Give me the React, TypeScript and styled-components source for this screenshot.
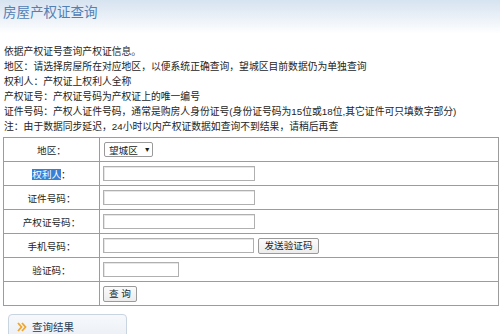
import React from "react";
import styled, { createGlobalStyle } from "styled-components";

const Global = createGlobalStyle`
  html, body { margin: 0; padding: 0; background: #fff; }
  body { font-family: "Liberation Sans", "Noto Sans CJK SC", sans-serif; color: #2b2b2b; overflow: hidden; }
  * { box-sizing: border-box; }
`;

const Page = styled.div`
  width: 500px;
  height: 334px;
  position: relative;
  overflow: hidden;
`;

const Header = styled.div`
  height: 34px;
  padding: 3px 0 0 3px;
  background: linear-gradient(180deg, #d6e3f0 0%, #e8eff7 45%, #ffffff 100%);
`;

const Title = styled.h1`
  margin: 0;
  font-size: 13.5px;
  font-weight: normal;
  line-height: 19px;
  color: #5080b4;
  letter-spacing: 0;
`;

const Intro = styled.div`
  padding: 10px 0 0 4px;
  font-size: 9.8px;
  line-height: 15px;
  color: #242424;
  white-space: nowrap;
`;

const Line = styled.div``;

const Table = styled.table`
  margin: 3px 0 0 3px;
  width: 496px;
  border-collapse: collapse;
  border: 1px solid #8a8a8a;
  font-size: 9.6px;
`;

const Row = styled.tr`
  height: 24px;
`;

const LabelCell = styled.td`
  width: 96px;
  border: 1px solid #9c9c9c;
  text-align: center;
  vertical-align: middle;
  padding: 0;
  color: #242424;
`;

const FieldCell = styled.td`
  border: 1px solid #9c9c9c;
  padding: 0 0 0 3px;
  vertical-align: middle;
`;

const FieldWrap = styled.div`
  display: flex;
  align-items: center;
  gap: 4px;
`;

const Selected = styled.span`
  background: #3a7fd6;
  color: #fff;
`;

const SelectBox = styled.div`
  display: inline-flex;
  align-items: center;
  gap: 6px;
  height: 15px;
  width: 49px;
  padding: 0 0 0 4px;
  margin-left: 1px;
  border: 1px solid #9a9a9a;
  border-radius: 2px;
  background: #fff;
  font-size: 9.6px;
  color: #222;
`;

const Arrow = styled.span`
  font-size: 7px;
  color: #1a1a1a;
`;

const TextInput = styled.input<{ $w: number }>`
  width: ${(p) => p.$w}px;
  height: 15px;
  margin: 0;
  padding: 0 2px;
  border: 1px solid #b0b0b0;
  box-shadow: inset 1px 1px 0 #e6e6e6;
  background: #fff;
  font-size: 9.6px;
  outline: none;
`;

const Btn = styled.button<{ $w: number; $h: number }>`
  width: ${(p) => p.$w}px;
  height: ${(p) => p.$h}px;
  margin: 0;
  padding: 0;
  border: 1px solid #9a9a9a;
  border-radius: 2px;
  background: linear-gradient(180deg, #fbfbfb 0%, #ececec 100%);
  font-family: "Liberation Sans", "Noto Sans CJK SC", sans-serif;
  font-size: 9.6px;
  color: #1e1e1e;
  line-height: 1;
`;

const Tab = styled.div`
  margin: 8px 0 0 8px;
  width: 119px;
  height: 30px;
  display: flex;
  align-items: flex-start;
  gap: 5px;
  padding: 6px 0 0 8px;
  border: 1px solid #c9d4e1;
  border-radius: 4px;
  background: linear-gradient(180deg, #f6f8fb 0%, #e9eef5 100%);
  font-size: 10.5px;
  line-height: 13px;
  color: #2a3a50;
`;

const fields: { label: React.ReactNode; kind: "select" | "input" | "phone" | "code" | "button" }[] = [
  { label: "地区：", kind: "select" },
  { label: (<><Selected>权利人</Selected>：</>), kind: "input" },
  { label: "证件号码：", kind: "input" },
  { label: "产权证号码：", kind: "input" },
  { label: "手机号码：", kind: "phone" },
  { label: "验证码：", kind: "code" },
  { label: "", kind: "button" },
];

function Field({ kind }: { kind: string }) {
  if (kind === "select")
    return (
      <SelectBox>
        望城区<Arrow>▼</Arrow>
      </SelectBox>
    );
  if (kind === "input") return <TextInput $w={152} />;
  if (kind === "phone")
    return (
      <FieldWrap>
        <TextInput $w={151} />
        <Btn $w={61} $h={16}>发送验证码</Btn>
      </FieldWrap>
    );
  if (kind === "code") return <TextInput $w={76} />;
  return <Btn $w={34} $h={16}>查 询</Btn>;
}

export default function App() {
  return (
    <Page>
      <Global />
      <Header>
        <Title>房屋产权证查询</Title>
      </Header>
      <Intro>
        <Line>依据产权证号查询产权证信息。</Line>
        <Line>地区：请选择房屋所在对应地区，以便系统正确查询，望城区目前数据仍为单独查询</Line>
        <Line>权利人：产权证上权利人全称</Line>
        <Line>产权证号：产权证号码为产权证上的唯一编号</Line>
        <Line>证件号码：产权人证件号码，通常是购房人身份证号(身份证号码为15位或18位,其它证件可只填数字部分)</Line>
        <Line>注：由于数据同步延迟，24小时以内产权证数据如查询不到结果，请稍后再查</Line>
      </Intro>
      <Table>
        <tbody>
          {fields.map((f, i) => (
            <Row key={i}>
              <LabelCell>{f.label}</LabelCell>
              <FieldCell>
                <Field kind={f.kind} />
              </FieldCell>
            </Row>
          ))}
        </tbody>
      </Table>
      <Tab>
        <svg width="10" height="12" viewBox="0 0 10 12">
          <path d="M1 2 L4.5 6 L1 10" fill="none" stroke="#f0a62a" strokeWidth="1.8" />
          <path d="M5 2 L8.5 6 L5 10" fill="none" stroke="#f0a62a" strokeWidth="1.8" />
        </svg>
        查询结果
      </Tab>
    </Page>
  );
}
